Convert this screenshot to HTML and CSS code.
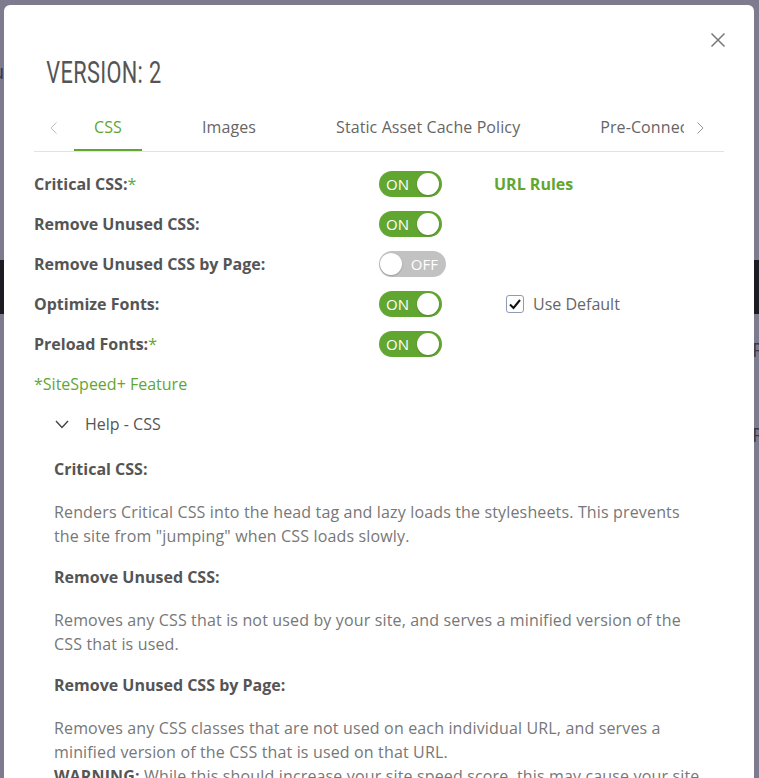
FILE: index.html
```html
<!DOCTYPE html>
<html lang="en">
<head>
<meta charset="utf-8">
<title>Version 2 - CSS</title>
<link rel="stylesheet" href="styles.css">
</head>
<body>
<div class="backdrop">
  <div class="bd-text">t</div>
  <div class="bd-text">u</div>
  <div class="bd-bar"></div>
  <div class="bd-text bd-r">R</div>
  <div class="bd-text bd-r2">R</div>
</div>

<div class="modal">
  <button class="close" aria-label="Close">
    <svg width="16" height="16" viewBox="0 0 16 16"><path d="M1.5 1.5 L14.5 14.5 M14.5 1.5 L1.5 14.5" stroke="#777" stroke-width="1.5" fill="none"/></svg>
  </button>
  <h1 class="title">VERSION: 2</h1>

  <div class="tabbar">
    <span class="arrow">
      <svg width="8" height="12" viewBox="0 0 8 12"><path d="M6.5 0.5 L1 6 L6.5 11.5" stroke="#bbb" stroke-width="1" fill="none"/></svg>
    </span>
    <div class="tabs">
      <span class="tab active">CSS</span>
      <span class="tab">Images</span>
      <span class="tab">Static Asset Cache Policy</span>
      <span class="tab">Pre-Connect</span>
    </div>
    <span class="arrow arrow-r">
      <svg width="8" height="12" viewBox="0 0 8 12"><path d="M1.5 0.5 L7 6 L1.5 11.5" stroke="#999" stroke-width="1" fill="none"/></svg>
    </span>
  </div>

  <div class="form">
    <div class="label">Critical CSS:<span class="star">*</span></div>
    <div><span class="toggle on"><span class="tlabel">ON</span><span class="knob"></span></span></div>
    <div><a class="link">URL Rules</a></div>

    <div class="label">Remove Unused CSS:</div>
    <div><span class="toggle on"><span class="tlabel">ON</span><span class="knob"></span></span></div>
    <div></div>

    <div class="label">Remove Unused CSS by Page:</div>
    <div><span class="toggle off"><span class="knob"></span><span class="tlabel">OFF</span></span></div>
    <div></div>

    <div class="label">Optimize Fonts:</div>
    <div><span class="toggle on"><span class="tlabel">ON</span><span class="knob"></span></span></div>
    <div class="check-wrap">
      <span class="checkbox">
        <svg width="14" height="14" viewBox="0 0 14 14"><path d="M2 7.5 L5.5 11 L12 3" stroke="#111" stroke-width="2" fill="none"/></svg>
      </span>
      <span class="check-text">Use Default</span>
    </div>

    <div class="label">Preload Fonts:<span class="star">*</span></div>
    <div><span class="toggle on"><span class="tlabel">ON</span><span class="knob"></span></span></div>
    <div></div>
  </div>

  <div class="feature">*SiteSpeed+ Feature</div>

  <div class="help-head">
    <svg width="14" height="9" viewBox="0 0 14 9"><path d="M1 1 L7 7.5 L13 1" stroke="#444" stroke-width="1.4" fill="none"/></svg>
    <span>Help - CSS</span>
  </div>

  <div class="help">
    <h3>Critical CSS:</h3>
    <p>Renders Critical CSS into the head tag and lazy loads the stylesheets. This prevents the site from "jumping" when CSS loads slowly.</p>
    <h3>Remove Unused CSS:</h3>
    <p>Removes any CSS that is not used by your site, and serves a minified version of the CSS that is used.</p>
    <h3>Remove Unused CSS by Page:</h3>
    <p>Removes any CSS classes that are not used on each individual URL, and serves a minified version of the CSS that is used on that URL.<br><b>WARNING:</b> While this should increase your site speed score, this may cause your site to look broken on some pages. Please review your pages after enabling.</p>
  </div>
</div>
</body>
</html>
```

FILE: styles.css
```css
* { box-sizing: border-box; }

html, body {
  margin: 0;
  height: 778px;
  overflow: hidden;
}

body {
  background: #7f7b8e;
  font-family: "Open Sans", "Liberation Sans", sans-serif;
  position: relative;
}

.backdrop {
  display: flex;
  flex-direction: column;
  padding-top: 28px;
}
.bd-text {
  font-size: 20px;
  color: #3a3846;
  height: 30px;
  margin-left: -8px;
}
.bd-bar {
  flex: none;
  margin-top: 172px;
  height: 54px;
  background: #1c1b22;
}
.bd-r { margin-left: 752px; margin-top: 22px; height: 85px; }
.bd-r2 { margin-left: 752px; }

.modal {
  position: absolute;
  left: 4px;
  top: 5px;
  width: 750px;
  height: 900px;
  background: #fff;
  border-radius: 6px;
  padding: 0 30px 0 30px;
}

.close {
  position: absolute;
  right: 28px;
  top: 27px;
  border: 0;
  background: none;
  padding: 0;
  width: 16px;
  height: 16px;
  display: block;
  cursor: pointer;
}
.close svg { display: block; }

.title {
  margin: 0;
  padding-top: 47px;
  padding-left: 18px;
  height: 90px;
  font-family: Roboto, "Liberation Sans", sans-serif;
  font-weight: 400;
  font-size: 32px;
  line-height: 40px;
  color: #555;
  transform: scaleX(0.68);
  transform-origin: left center;
  white-space: nowrap;
  letter-spacing: 0.5px;
}

.tabbar {
  display: flex;
  align-items: stretch;
  height: 57px;
  border-bottom: 1px solid #e2e2e2;
}
.arrow {
  width: 40px;
  flex: none;
  display: flex;
  align-items: center;
  justify-content: center;
  padding-top: 10px;
}
.arrow-r { padding-right: 8px; }
.tabs {
  flex: 1;
  display: flex;
  gap: 40px;
  overflow: hidden;
  white-space: nowrap;
}
.tab {
  flex: none;
  padding: 10px 20px 0;
  font-size: 16px;
  letter-spacing: 0.1px;
  color: #666;
  display: flex;
  align-items: center;
  border-bottom: 3px solid transparent;
  margin-bottom: -1px;
}
.tab.active {
  color: #62a632;
  border-bottom-color: #62a632;
}

.form {
  display: grid;
  grid-template-columns: 345px 115px 1fr;
  grid-auto-rows: 40px;
  align-items: center;
  margin-top: 12px;
}
.label {
  font-size: 16px;
  font-weight: 700;
  color: #555;
}
.star { color: #62a632; font-weight: 400; }

.toggle {
  display: inline-flex;
  align-items: center;
  height: 26px;
  border-radius: 13px;
  vertical-align: middle;
}
.toggle.on {
  background: #62a632;
  width: 63px;
  padding: 0 3px 0 7px;
  justify-content: space-between;
}
.toggle.off {
  background: #c2c2c2;
  width: 67px;
  padding: 0 8px 0 1px;
  justify-content: space-between;
}
.tlabel {
  color: #fff;
  font-size: 15px;
  font-weight: 500;
  line-height: 1;
}
.knob {
  width: 22px;
  height: 22px;
  border-radius: 50%;
  background: #fff;
  box-shadow: 0 1px 2px rgba(0,0,0,0.2);
}

.link {
  font-size: 16px;
  font-weight: 700;
  color: #62a632;
}

.check-wrap {
  display: flex;
  align-items: center;
  padding-left: 12px;
  gap: 9px;
}
.checkbox {
  width: 18px;
  height: 18px;
  border: 1px solid #8d9bb5;
  border-radius: 3px;
  display: flex;
  align-items: center;
  justify-content: center;
  background: #fff;
}
.check-text {
  font-size: 16px;
  color: #666;
}

.feature {
  height: 40px;
  display: flex;
  align-items: center;
  color: #62a632;
  font-size: 16px;
}

.help-head {
  height: 40px;
  display: flex;
  align-items: center;
  padding-left: 21px;
  gap: 16px;
  color: #555;
  font-size: 16px;
}

.help {
  padding: 13px 20px 0 20px;
  color: #777;
  font-size: 16px;
  line-height: 24px;
}
.help h3 {
  margin: 0 0 19px;
  font-size: 16px;
  font-weight: 700;
  color: #555;
  line-height: 24px;
}
.help p {
  margin: 0 0 17px;
  max-width: 650px;
  letter-spacing: 0.15px;
}
.help b { color: #555; }
```
